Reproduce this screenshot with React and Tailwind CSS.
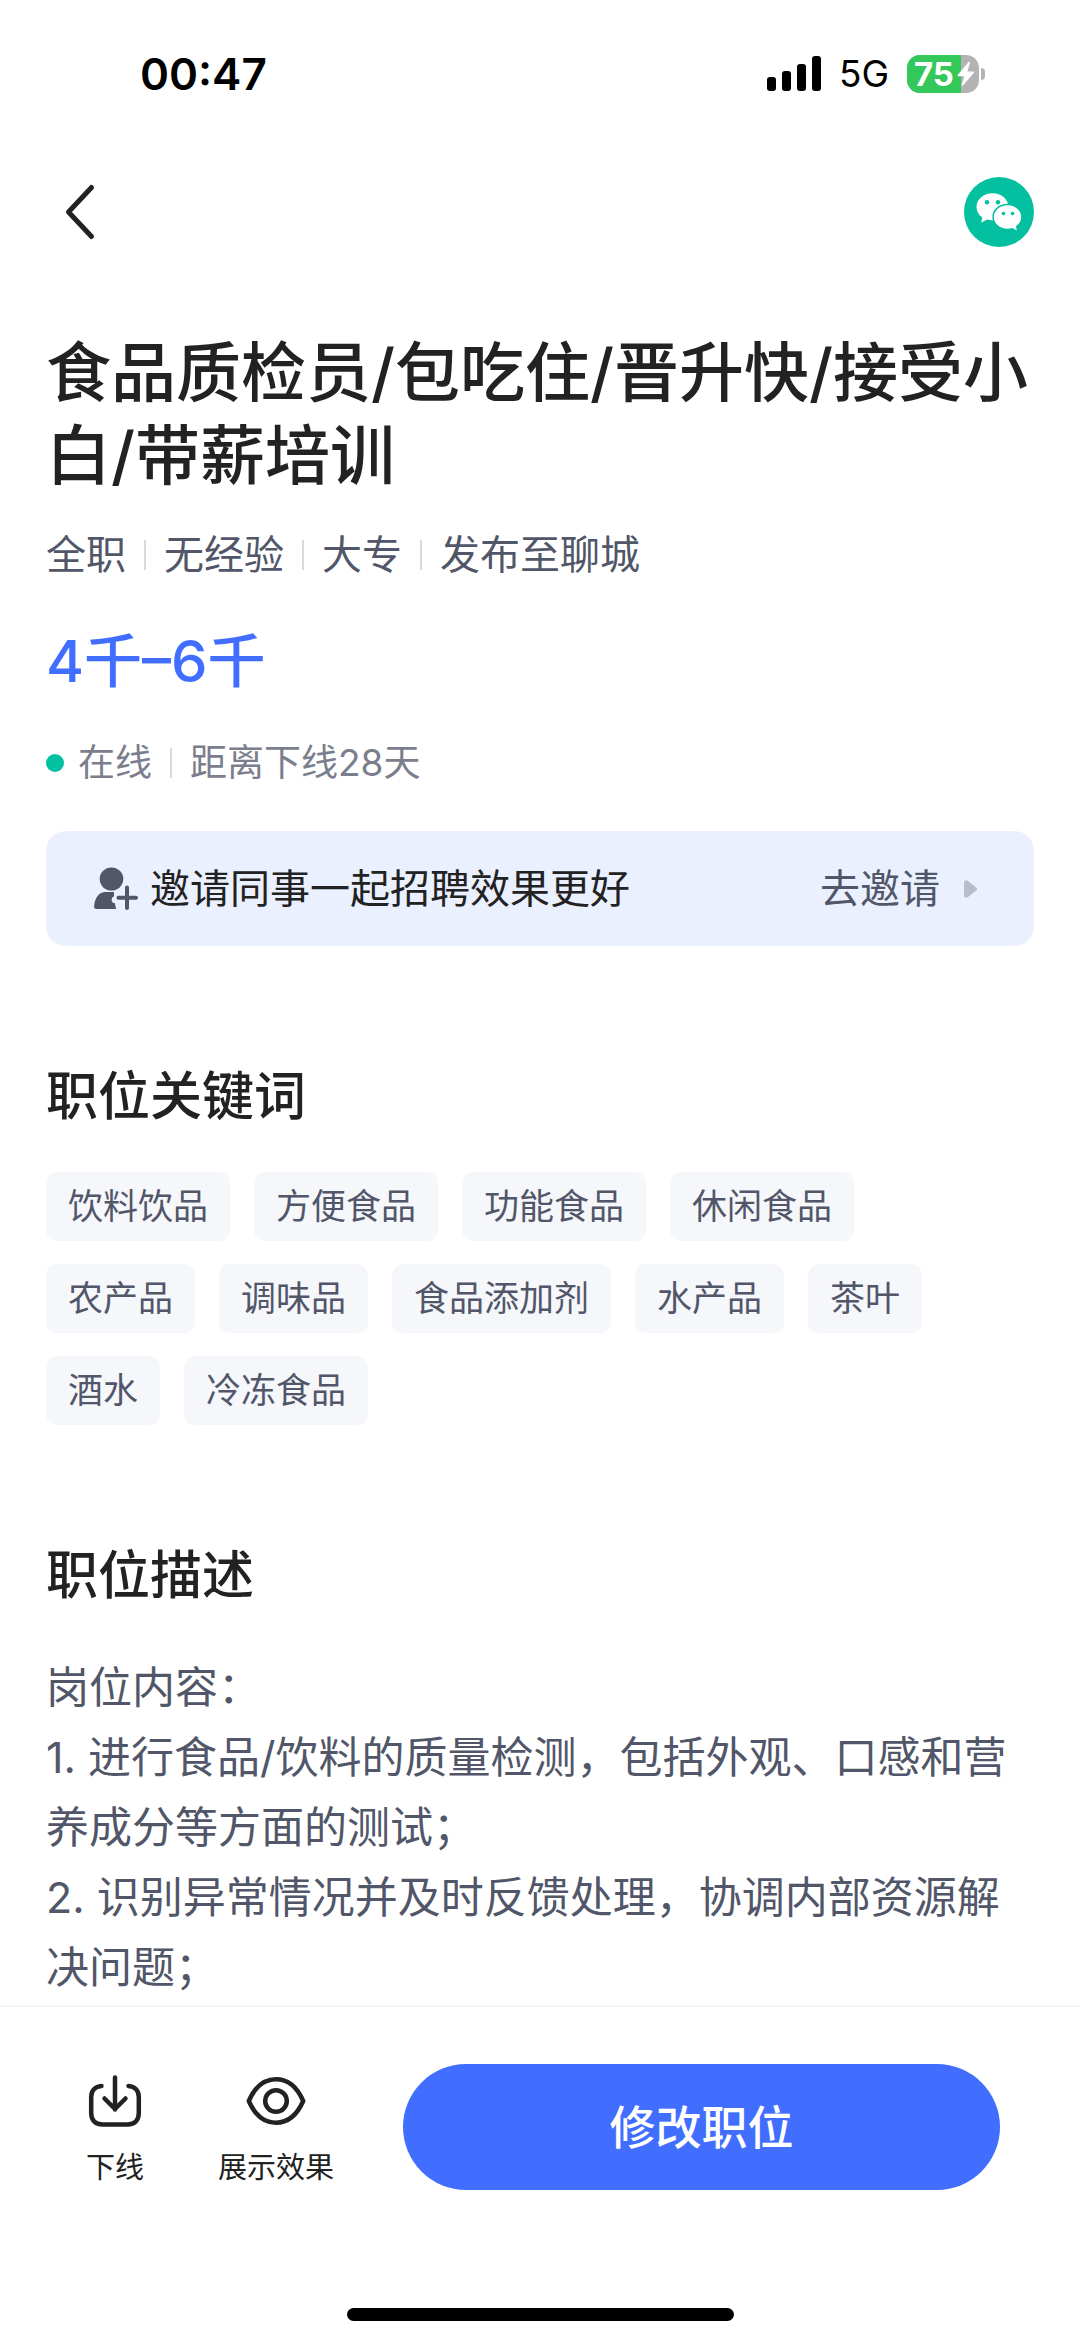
const jobMeta = ["全职", "无经验", "大专", "发布至聊城"];

const keywords = [
  "饮料饮品",
  "方便食品",
  "功能食品",
  "休闲食品",
  "农产品",
  "调味品",
  "食品添加剂",
  "水产品",
  "茶叶",
  "酒水",
  "冷冻食品",
];

const description = [
  "岗位内容：",
  "1. 进行食品/饮料的质量检测，包括外观、口感和营养成分等方面的测试；",
  "2. 识别异常情况并及时反馈处理，协调内部资源解决问题；",
];

function SignalIcon() {
  return (
    <svg className="w-[54px] h-[36px]" viewBox="0 0 54 36" fill="#000" aria-hidden="true">
      <rect x="0" y="21" width="9" height="14" rx="3" />
      <rect x="15" y="15" width="9" height="20" rx="3" />
      <rect x="30" y="8" width="9" height="27" rx="3" />
      <rect x="45" y="0" width="9" height="35" rx="3" />
    </svg>
  );
}

function Battery() {
  return (
    <div className="flex items-center gap-[2px]">
      <div className="relative flex items-center w-[72px] h-[38px] rounded-[13px] bg-[#b3b3b3]">
        <div className="absolute inset-y-0 left-0 w-3/4 rounded-l-[13px] bg-[#34c759]" />
        <span className="relative pl-[7px] text-[33px] leading-[38px] font-bold text-white">75</span>
        <svg className="absolute right-[3px] top-[6px] w-[20px] h-[26px]" viewBox="0 0 20 26" aria-hidden="true">
          <path
            d="M12.6 1 L1.6 14 Q1 15.2 2.4 15.2 L8.4 15.2 L5.6 24 Q5.8 25.4 7 24.6 L18 11.8 Q18.6 10.4 17.2 10.4 L11.4 10.4 L14 2 Q13.8 0.4 12.6 1Z"
            fill="#fff"
          />
        </svg>
      </div>
      <div className="w-[4px] h-[12px] rounded-r-full bg-[#b3b3b3]" />
    </div>
  );
}

function WechatIcon() {
  return (
    <svg className="w-[70px] h-[70px]" viewBox="0 0 70 70" aria-hidden="true">
      <circle cx="35" cy="35" r="35" fill="#02c0a0" />
      <path
        d="M28.5 16.2c-8.900 0-16 6-16 13.700 0 4.200 2.200 8 5.800 10.600l-1.200 5.300 6-3.200c1.700.5 3.500.8 5.400.8 8.900 0 16-6 16-13.500s-7.100-13.700-16-13.700z"
        fill="#fff"
      />
      <path
        d="M43.500 28.300c-7.600 0-13.700 5.200-13.700 11.700s6.100 11.700 13.700 11.700c1.700 0 3.300-.3 4.800-.7l4.500 2.500-.9-4.300c3.300-2.100 5.300-5.500 5.300-9.200 0-6.500-6.100-11.700-13.700-11.700z"
        fill="#fff"
        stroke="#02c0a0"
        strokeWidth="3"
        paintOrder="stroke"
      />
      <g fill="#02c0a0">
        <circle cx="23" cy="25.300" r="2.200" />
        <circle cx="34" cy="25.300" r="2.200" />
        <circle cx="39.500" cy="36.500" r="1.800" />
        <circle cx="48.500" cy="36.500" r="1.800" />
      </g>
    </svg>
  );
}

function InviteIcon() {
  return (
    <svg className="w-[44px] h-[44px]" viewBox="0 0 44 44" aria-hidden="true">
      <ellipse cx="17.500" cy="12" rx="11.800" ry="11.500" fill="#515669" />
      <path
        d="M10.500 25h9.500v4.500a3.500 3.500 0 0 0 1 6.800c.2 2.300.6 4 1.400 5.700H2.500C1 42 0 41 .1 39.500.6 31.500 4.500 25.500 10.500 25z"
        fill="#515669"
      />
      <path d="M33 20.500v20.500M24.500 30.800h17.500" stroke="#515669" strokeWidth="4" strokeLinecap="round" />
    </svg>
  );
}

function OfflineIcon() {
  return (
    <svg
      className="w-[60px] h-[56px]"
      viewBox="0 0 60 56"
      fill="none"
      stroke="#222"
      strokeWidth="4.500"
      strokeLinecap="round"
      strokeLinejoin="round"
      aria-hidden="true"
    >
      <path d="M16.500 13C10 13.500 6.200 17.500 6.200 24v16c0 7 4 11.400 11.300 11.400h25c7.300 0 11.300-4.400 11.300-11.400V24c0-6.500-3.800-10.500-10.300-11" />
      <path d="M30 4.500v32M19.500 25.500L30 36l10.500-10.500" />
    </svg>
  );
}

function EyeIcon() {
  return (
    <svg
      className="w-[60px] h-[56px]"
      viewBox="0 0 60 56"
      fill="none"
      stroke="#222"
      strokeWidth="4.500"
      strokeLinejoin="round"
      aria-hidden="true"
    >
      <path d="M2.800 28C8.500 15 17.500 6.300 30 6.300S51.500 15 57.200 28C51.500 41 42.500 49.700 30 49.700S8.500 41 2.800 28z" />
      <circle cx="30" cy="28" r="10.800" />
    </svg>
  );
}

function Divider() {
  return <span className="w-[2px] h-[30px] bg-[#d9dadf]" />;
}

export default function App() {
  return (
    <div
      lang="zh-CN"
      className="min-h-screen flex flex-col bg-white text-[#222] font-['Inter','Noto_Sans_CJK_SC',sans-serif]"
    >
      <div className="flex items-center justify-between pt-[51px] pl-[140px] pr-[95px] text-black">
        <span className="text-[44px] leading-[46px] font-semibold">00:47</span>
        <div className="flex items-center gap-[18px]">
          <SignalIcon />
          <span className="text-[37px] leading-[46px]">5G</span>
          <Battery />
        </div>
      </div>

      <header className="flex items-center justify-between mt-20 pl-[58px] pr-[46px]">
        <button type="button" aria-label="返回" className="w-[44px] h-[70px]">
          <svg
            className="w-[44px] h-[70px]"
            viewBox="0 0 44 70"
            fill="none"
            stroke="#222"
            strokeWidth="5"
            strokeLinecap="round"
            strokeLinejoin="round"
          >
            <path d="M33.500 10.500L10.500 35L33.500 59.500" />
          </svg>
        </button>
        <button type="button" aria-label="微信分享">
          <WechatIcon />
        </button>
      </header>

      <main className="flex-1 px-[46px]">
        <h1 className="mt-[84px] text-[65px] leading-[83px] font-medium">
          食品质检员/包吃住/晋升快/接受小白/带薪培训
        </h1>

        <div className="flex items-center gap-[18px] mt-[30px] text-[40px] leading-[56px] text-[#515669]">
          {jobMeta.map((item, index) => (
            <div key={item} className="flex items-center gap-[18px]">
              {index > 0 && <Divider />}
              <span>{item}</span>
            </div>
          ))}
        </div>

        <p className="mt-[38px] text-[58px] leading-[80px] font-medium text-[#416eff]">4千–6千</p>

        <div className="flex items-center gap-[18px] mt-[36px] text-[37px] leading-[52px] text-[#7b7e8c]">
          <div className="flex items-center gap-[14px]">
            <span className="w-[18px] h-[18px] rounded-full bg-[#02c0a0]" />
            <span>在线</span>
          </div>
          <Divider />
          <span>距离下线28天</span>
        </div>

        <a
          href="#invite"
          className="flex items-center justify-between mt-[42px] py-[29px] pl-[48px] pr-[57px] rounded-[20px] bg-[#ebf0ff] text-[40px] leading-[57px]"
        >
          <span className="flex items-center gap-[12px]">
            <InviteIcon />
            邀请同事一起招聘效果更好
          </span>
          <span className="flex items-center gap-[24px] text-[#515669]">
            去邀请
            <svg className="w-[13px] h-[18px]" viewBox="0 0 13 18" aria-hidden="true">
              <path
                d="M0 3C0 .5 2 -.5 4 .9l7.500 6c2 1.600 2 2.600 0 4.200l-7.500 6C2 18.500 0 17.500 0 15z"
                fill="#b9bccb"
              />
            </svg>
          </span>
        </a>

        <section className="mt-[115px]">
          <h2 className="text-[52px] leading-[72px] font-medium">职位关键词</h2>
          <ul className="flex flex-wrap gap-x-[24px] gap-y-[23px] mt-[39px] pr-6">
            {keywords.map((word) => (
              <li
                key={word}
                className="px-[22px] rounded-[11px] bg-[#f5f7fb] text-[35px] leading-[69px] text-[#515669]"
              >
                {word}
              </li>
            ))}
          </ul>
        </section>

        <section className="mt-[115px]">
          <h2 className="text-[52px] leading-[72px] font-medium">职位描述</h2>
          <div className="mt-[40px] text-[43px] leading-[70px] text-[#515669]">
            {description.map((line) => (
              <p key={line}>{line}</p>
            ))}
          </div>
        </section>
      </main>

      <footer className="sticky bottom-0 border-t-2 border-[#f5f5f6] bg-white">
        <div className="flex items-start pt-[57px] pl-[85px] pr-[80px]">
          <button type="button" className="flex flex-col items-center gap-[18px] pt-[9px] text-[29px] leading-[42px]">
            <OfflineIcon />
            下线
          </button>
          <button
            type="button"
            className="flex flex-col items-center gap-[18px] pt-[9px] ml-[73px] text-[29px] leading-[42px]"
          >
            <EyeIcon />
            展示效果
          </button>
          <button
            type="button"
            className="flex-1 ml-[69px] h-[126px] rounded-full bg-[#416eff] text-[46px] font-medium text-white"
          >
            修改职位
          </button>
        </div>
        <div className="w-[387px] h-[13px] mx-auto mt-[118px] mb-[20px] rounded-full bg-black" />
      </footer>
    </div>
  );
}
